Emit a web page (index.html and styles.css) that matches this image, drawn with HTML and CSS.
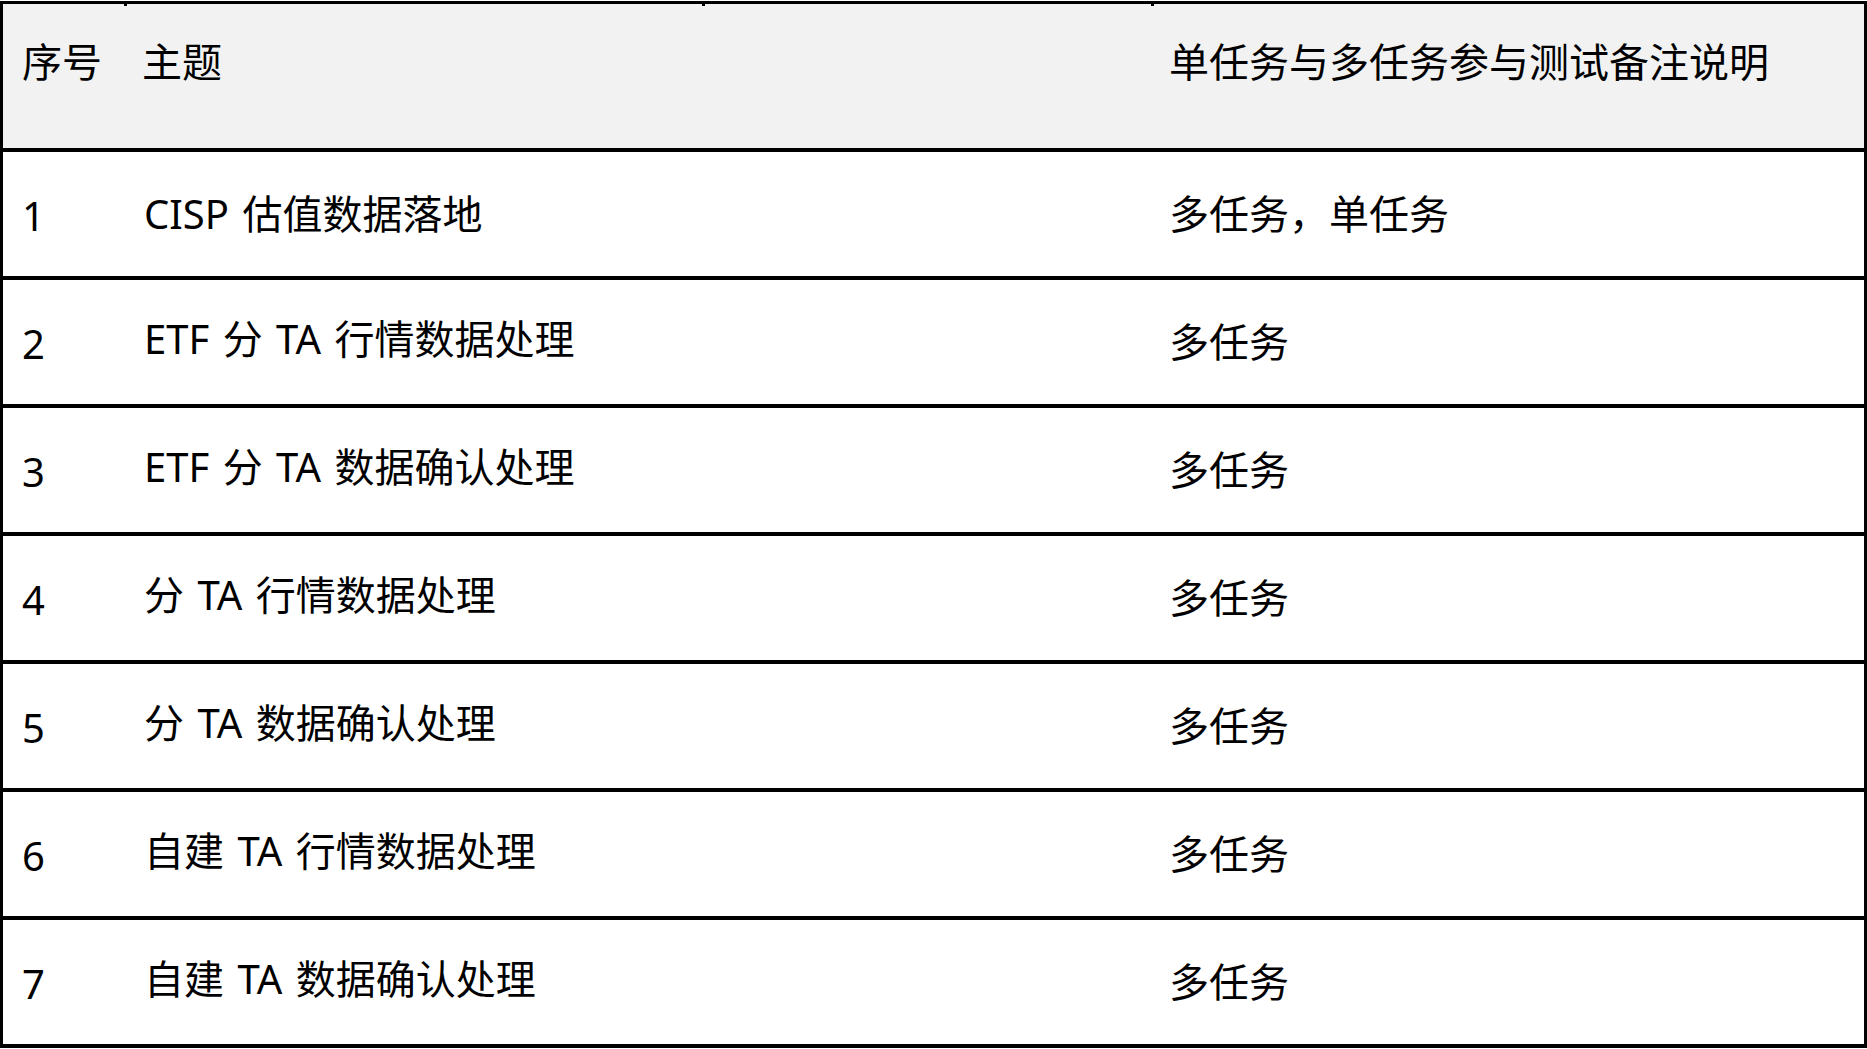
FILE: index.html
```html
<!DOCTYPE html>
<html lang="zh-CN">
<head>
<meta charset="utf-8">
<title>任务列表</title>
<link rel="stylesheet" href="styles.css">
</head>
<body>
<div class="sheet">
  <div class="row head">
    <span class="tick tick-a"></span>
    <span class="tick tick-b"></span>
    <span class="tick tick-c"></span>
    <div class="cell">序号</div>
    <div class="cell">主题</div>
    <div class="cell">单任务与多任务参与测试备注说明</div>
  </div>
  <div class="row">
    <div class="cell num">1</div>
    <div class="cell topic first">CISP 估值数据落地</div>
    <div class="cell">多任务，单任务</div>
  </div>
  <div class="row">
    <div class="cell num">2</div>
    <div class="cell topic">ETF 分 TA 行情数据处理</div>
    <div class="cell">多任务</div>
  </div>
  <div class="row">
    <div class="cell num">3</div>
    <div class="cell topic">ETF 分 TA 数据确认处理</div>
    <div class="cell">多任务</div>
  </div>
  <div class="row">
    <div class="cell num">4</div>
    <div class="cell topic">分 TA 行情数据处理</div>
    <div class="cell">多任务</div>
  </div>
  <div class="row">
    <div class="cell num">5</div>
    <div class="cell topic">分 TA 数据确认处理</div>
    <div class="cell">多任务</div>
  </div>
  <div class="row">
    <div class="cell num">6</div>
    <div class="cell topic">自建 TA 行情数据处理</div>
    <div class="cell">多任务</div>
  </div>
  <div class="row last">
    <div class="cell num">7</div>
    <div class="cell topic">自建 TA 数据确认处理</div>
    <div class="cell">多任务</div>
  </div>
</div>
</body>
</html>
```

FILE: styles.css
```css
html, body {
  margin: 0;
  padding: 0;
  background: #ffffff;
}

body {
  font-family: "Noto Sans", "Noto Sans CJK SC", sans-serif;
  color: #000;
  width: 1867px;
  height: 1049px;
  overflow: hidden;
}

.sheet {
  margin-top: 1px;
  width: 1867px;
  box-sizing: border-box;
  border-top: 3px solid #000;
  border-left: 3px solid #000;
  border-right: 3px solid #000;
  border-bottom: 4px solid #000;
  display: flex;
  flex-direction: column;
}

.row {
  display: grid;
  grid-template-columns: 122px 1027px 1fr;
  height: 124px;
  align-items: center;
  border-bottom: 4px solid #000;
  font-size: 40px;
  line-height: 40px;
}

.row.last {
  border-bottom: none;
}

.row.head {
  position: relative;
  height: 144px;
  align-items: start;
  background: #f2f2f2;
}

.head .cell {
  padding-top: 38px;
}

.cell {
  padding-left: 17px;
  white-space: nowrap;
}

.head .cell:first-of-type,
.num {
  padding-left: 19px;
}

.num {
  padding-top: 4px;
}

.topic {
  padding-left: 19px;
  padding-bottom: 6px;
  word-spacing: 3px;
}

.topic.first {
  padding-bottom: 0;
}

.tick {
  position: absolute;
  top: 0;
  width: 3px;
  height: 2px;
  background: #000;
}

.tick-a { left: 121px; }
.tick-b { left: 699px; }
.tick-c { left: 1148px; }
```
